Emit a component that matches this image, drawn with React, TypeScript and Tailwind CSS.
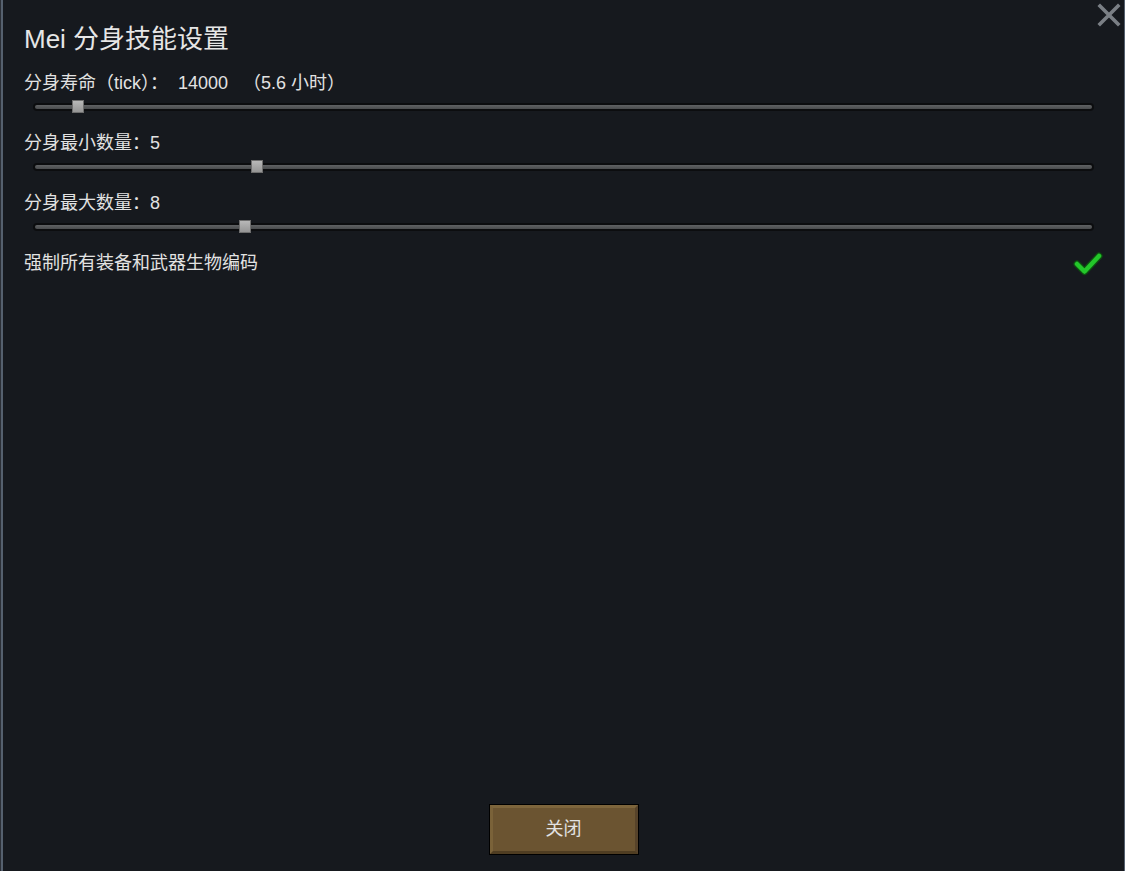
import React from "react";

const font = "font-['Liberation_Sans','Noto_Sans_CJK_SC',sans-serif]";

type SliderProps = { pct: number };

function Slider({ pct }: SliderProps) {
  return (
    <div className="relative mx-[9px] flex h-6 items-center">
      <div className="h-[8px] w-full rounded-full bg-[#0c0d0f] px-[2px] py-[2px]">
        <div className="h-[4px] w-full rounded-full bg-gradient-to-b from-[#606264] to-[#4a4c4e]" />
      </div>
      <div
        className="absolute top-[5px] h-[13px] w-[12px] border border-[#6e6e6e] bg-gradient-to-b from-[#b8b8b8] to-[#959595]"
        style={{ left: `calc(${pct}% - 6px)` }}
      />
    </div>
  );
}

const sliders = [
  { label: "分身寿命（tick）：  14000 \u00a0\u00a0（5.6 小时）", pct: 4.2 },
  { label: "分身最小数量：5", pct: 21.1 },
  { label: "分身最大数量：8", pct: 20.0 },
];

export default function App() {
  return (
    <div className={`flex h-[871px] w-[1125px] bg-[#2b2f36] ${font}`}>
      <div className="relative ml-[1px] flex flex-1 flex-col border-l-2 border-r border-[#55606e] bg-[#16191e] pl-[21px] pr-[21px]">
        <button className="absolute right-[3px] top-[3px] h-6 w-6">
          <svg viewBox="0 0 24 24" className="h-6 w-6">
            <path d="M3 3 L21 21 M21 3 L3 21" stroke="#7a7f85" strokeWidth="3.6" strokeLinecap="square" />
          </svg>
        </button>

        <h1 className="mt-[23px] text-[26px] leading-8 text-[#e6e6e6]">Mei 分身技能设置</h1>

        <div className="mt-[16px] flex flex-col gap-3">
          {sliders.map((s) => (
            <div key={s.label} className="flex flex-col">
              <div className="h-6 whitespace-pre text-[18px] leading-6 text-[#e2e2e2]">{s.label}</div>
              <Slider pct={s.pct} />
            </div>
          ))}
          <div className="flex h-6 items-center justify-between">
            <span className="text-[18px] leading-6 text-[#e2e2e2]">强制所有装备和武器生物编码</span>
            <svg viewBox="0 0 30 28" className="h-[28px] w-[30px]">
              <path d="M4 15 L11.5 22.5 L26 7" fill="none" stroke="#0d4f10" strokeWidth="7" strokeLinecap="round" strokeLinejoin="round" />
              <path d="M4 15 L11.5 22.5 L26 7" fill="none" stroke="#23c62a" strokeWidth="4.5" strokeLinecap="round" strokeLinejoin="round" />
            </svg>
          </div>
        </div>

        <div className="flex-1" />

        <div className="mb-4 flex justify-center">
          <button className="h-[51px] w-[150px] border border-black bg-[#6b5431] p-0">
            <div className="flex h-full w-full items-center justify-center border-[3px] border-b-[#4f3d22] border-l-[#7a6239] border-r-[#57432a] border-t-[#7d653c] text-[18px] text-[#e2e2e2]">
              关闭
            </div>
          </button>
        </div>
      </div>
    </div>
  );
}
